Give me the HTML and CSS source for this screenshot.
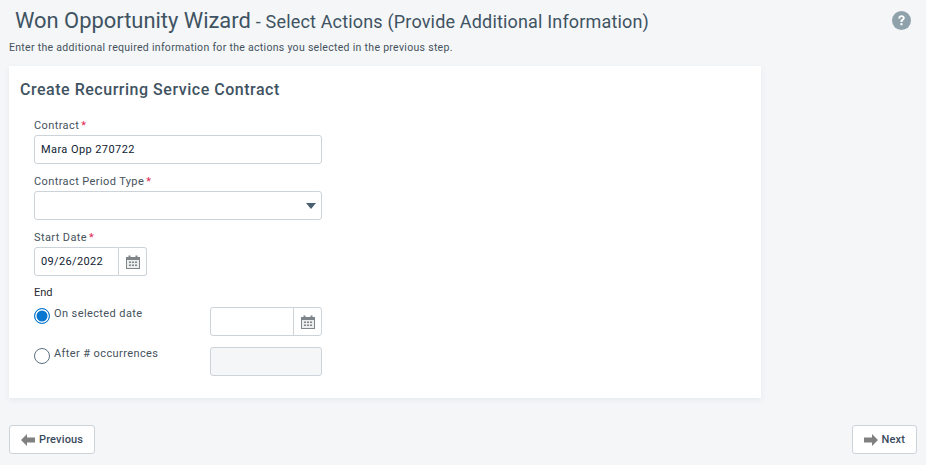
FILE: index.html
```html
<!DOCTYPE html>
<html lang="en">
<head>
<meta charset="utf-8">
<title>Won Opportunity Wizard</title>
<link rel="stylesheet" href="styles.css">
</head>
<body>
<svg class="defs" width="0" height="0" aria-hidden="true">
  <symbol id="cal" viewBox="0 0 14 14">
    <path fill="#7f8589" d="M0 2h2.500V0.500h2V2h5V0.500h2V2H14v12H0z"/>
    <path fill="#eceded" d="M1 5h12v8H1z"/>
    <path fill="#7f8589" d="M3 6.500h2v1.500H3zM6 6.500h2v1.500H6zM9 6.500h2v1.500H9zM3 9.500h2V11H3zM6 9.500h2V11H6zM9 9.500h2V11H9z"/>
  </symbol>
</svg>
<header class="head">
  <div class="title-row">
    <h1 class="title"><span class="title-main">Won Opportunity Wizard</span> <span class="title-sub">- Select Actions (Provide Additional Information)</span></h1>
    <svg class="help" viewBox="0 0 18 18" width="19" height="19" aria-label="Help">
      <circle cx="9" cy="9" r="9" fill="#8fa1ab"/>
      <path d="M6 7c0-1.900 1.300-3 3.100-3 1.700 0 3 1 3 2.700 0 2.200-2.300 2.200-2.300 3.800H8c0-2.700 2.200-2.700 2.200-3.800 0-.6-.5-1-1.100-1-.7 0-1.200.5-1.200 1.300z" fill="#fff"/>
      <rect x="8" y="11.500" width="1.900" height="2" fill="#fff"/>
    </svg>
  </div>
  <p class="intro">Enter the additional required information for the actions you selected in the previous step.</p>
</header>
<main class="card">
  <h2 class="card-title">Create Recurring Service Contract</h2>
  <form class="form">
    <div class="field">
      <label class="label">Contract<span class="req">*</span></label>
      <div class="input wide">Mara Opp 270722</div>
    </div>
    <div class="field">
      <label class="label">Contract Period Type<span class="req">*</span></label>
      <div class="input wide select"><span class="caret"></span></div>
    </div>
    <div class="field field-last">
      <label class="label">Start Date<span class="req">*</span></label>
      <div class="date start">
        <div class="input date-text">09/26/2022</div>
        <div class="date-btn"><svg width="14" height="14"><use href="#cal"/></svg></div>
      </div>
    </div>
    <div class="end-label">End</div>
    <div class="end-grid">
      <div class="radio-opt">
        <span class="radio on"></span>
        <span class="radio-label">On selected date</span>
      </div>
      <div class="date end">
        <div class="date-inner"></div>
        <div class="date-btn inner"><svg width="14" height="14"><use href="#cal"/></svg></div>
      </div>
      <div class="radio-opt">
        <span class="radio"></span>
        <span class="radio-label">After # occurrences</span>
      </div>
      <div class="input disabled"></div>
    </div>
  </form>
</main>
<footer class="foot">
  <button class="btn" type="button">
    <svg width="14" height="12" viewBox="0 0 14 12"><path fill="#808080" d="M0 6l6-6v3.500h8v5H6V12z"/></svg>Previous
  </button>
  <button class="btn" type="button">
    <svg width="14" height="12" viewBox="0 0 14 12"><path fill="#808080" d="M14 6L8 0v3.500H0v5h8V12z"/></svg>Next
  </button>
</footer>
</body>
</html>
```
FILE: styles.css
```css
* { box-sizing: border-box; }
html, body { margin: 0; padding: 0; }
body {
  width: 926px;
  height: 465px;
  overflow: hidden;
  background: #f4f6f8;
  font-family: Roboto, sans-serif;
  color: #3f4f5a;
  font-size: 11px;
  letter-spacing: 0.4px;
}
.defs { position: absolute; }
.head { padding: 9px 15px 0 9px; }
.title-row { display: flex; justify-content: space-between; align-items: center; height: 24px; padding-left: 6px; }
.title { margin: 0; font-weight: 400; letter-spacing: 0; color: #3f5362; white-space: nowrap; line-height: 24px; }
.title-main { font-size: 21.900px; }
.title-sub { font-size: 18px; margin-left: -0.5px; letter-spacing: 0.17px; }
.help { display: block; margin: 0 0 1px; }
.intro { margin: 8px 0 0; font-size: 10.500px; line-height: 14px; color: #45525c; letter-spacing: 0.3px; }
.card {
  width: 752px;
  height: 332px;
  margin: 11px 0 0 9px;
  padding: 15px 11px 0;
  background: #fff;
  box-shadow: 0 2px 6px rgba(60, 70, 80, 0.07);
}
.card-title { margin: 0; font-size: 16px; font-weight: 500; line-height: 18px; color: #3f5362; letter-spacing: 0.52px; }
.form { padding: 20px 0 0 14px; width: 302px; }
.field { margin-bottom: 11px; }
.field-last { margin-bottom: 10px; }
.label { display: block; line-height: 14px; height: 16px; color: #45525c; }
.req { color: #e0284f; margin-left: 2px; }
.input {
  height: 29px;
  border: 1px solid #ccd3d9;
  border-radius: 3px;
  background: #fff;
  padding: 0 6px;
  line-height: 27px;
  color: #0f2233;
  font-weight: 400;
  font-size: 11px;
  letter-spacing: 0.42px;
}
.wide { width: 288px; }
.select { display: flex; align-items: center; justify-content: flex-end; padding-right: 5px; }
.caret { width: 0; height: 0; border-left: 5px solid transparent; border-right: 5px solid transparent; border-top: 6px solid #4a6070; }
.date { display: flex; }
.date-text { width: 85px; border-radius: 3px 0 0 3px; letter-spacing: 0.35px; }
.date-btn {
  width: 28px;
  height: 29px;
  border: 1px solid #ccd3d9;
  border-left: 0;
  border-radius: 0 3px 3px 0;
  display: flex;
  align-items: center;
  justify-content: center;
}
.end-label { line-height: 14px; color: #1f2a33; letter-spacing: 0; }
.end-grid { display: grid; grid-template-columns: 176px 112px; row-gap: 11px; margin-top: 7px; }
.radio-opt { display: flex; align-items: flex-start; height: 29px; }
.radio {
  width: 16px;
  height: 16px;
  margin-top: 1px;
  border: 1px solid #5b7080;
  border-radius: 50%;
  background: #fff;
  flex: none;
}
.radio.on { border-color: #0a78d0; background: #0a78d0; box-shadow: inset 0 0 0 1.500px #fff; }
.radio-label { margin-left: 4px; line-height: 14px; color: #45525c; font-weight: 400; font-size: 11px; letter-spacing: 0.4px; }
.end { width: 112px; height: 29px; border: 1px solid #ccd3d9; border-radius: 3px; background: #fff; }
.date-inner { flex: 1; }
.date-btn.inner { height: 27px; border: 0; border-left: 1px solid #ccd3d9; border-radius: 0; }
.disabled { width: 112px; background: #f4f6f8; }
.foot { display: flex; justify-content: space-between; margin: 27px 9px 0; }
.btn {
  display: flex;
  align-items: center;
  gap: 4px;
  height: 29px;
  padding: 0 11px 0 11px;
  background: #fff;
  border: 1px solid #ccd3d9;
  border-radius: 3px;
  font: 500 11px Roboto, sans-serif;
  letter-spacing: 0.15px;
  color: #3a4a5c;
}
```
